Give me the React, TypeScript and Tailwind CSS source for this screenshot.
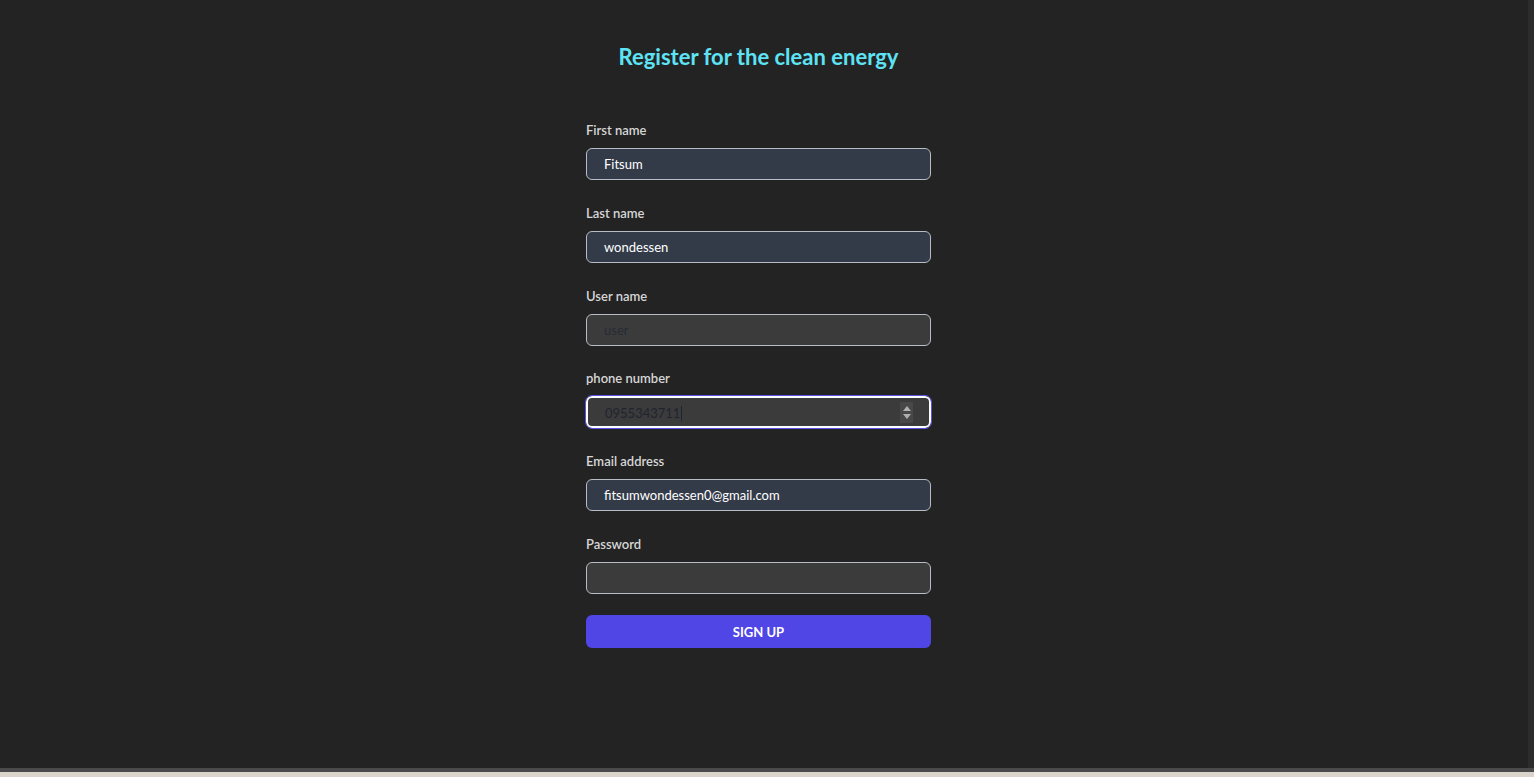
import React from "react";

const font = { fontFamily: 'Lato, "Noto Sans", sans-serif' };

function Field({
  label,
  value,
  placeholder,
  filled,
  focused,
  spinner,
  dark,
}: {
  label: string;
  value?: string;
  placeholder?: string;
  filled?: boolean;
  focused?: boolean;
  spinner?: boolean;
  dark?: boolean;
}) {
  return (
    <div>
      <label className="block text-[13px] leading-5 font-semibold text-[#d6d6d6]">{label}</label>
      <div className="mt-2">
        <div
          className={
            "relative flex h-[32px] items-center rounded-md pl-[17px] pr-3 pt-[2px] text-[13px] " +
            (focused
              ? "border-2 border-white bg-[#3b3b3b] outline outline-1 outline-[#5b52e8]"
              : filled
              ? "border border-[#b8bcc4] bg-[#333a48]"
              : "border border-[#b8bcc4] bg-[#3b3b3b]")
          }
        >
          {value ? (
            <span className={dark ? "text-[#1f2430]" : "text-white"}>
              {value}
              {focused && <span className="ml-[1px] inline-block h-[15px] w-px translate-y-[3px] bg-[#1f2430]" />}
            </span>
          ) : placeholder ? (
            <span className="text-[#262b36]">{placeholder}</span>
          ) : null}
          {spinner && (
            <div className="absolute right-[16px] top-[4px] flex h-[21px] w-[13px] flex-col items-center justify-center gap-[3px] bg-[#484848]">
              <svg width="8" height="5" viewBox="0 0 8 5"><path d="M4 0 L8 5 L0 5 Z" fill="#b0b0b0" /></svg>
              <svg width="8" height="5" viewBox="0 0 8 5"><path d="M0 0 L8 0 L4 5 Z" fill="#b0b0b0" /></svg>
            </div>
          )}
        </div>
      </div>
    </div>
  );
}

export default function App() {
  return (
    <div className="flex h-[777px] w-[1534px] flex-col overflow-hidden bg-[#232323]" style={font}>
      <div className="flex flex-1">
        <div className="flex flex-1 flex-col items-center pt-[41px] pr-[11px]">
          <h2 className="text-[22px] leading-8 font-bold text-[#5ee3f5]">
            Register for the clean energy
          </h2>
          <form className="mt-[47px] flex w-[345px] flex-col gap-[22.8px]">
            <Field label="First name" value="Fitsum" filled />
            <Field label="Last name" value="wondessen" filled />
            <Field label="User name" placeholder="user" />
            <Field label="phone number" value="0955343711" focused spinner dark />
            <Field label="Email address" value="fitsumwondessen0@gmail.com" filled />
            <Field label="Password" />
            <button
              type="button"
              className="-mt-[2px] flex h-[33px] w-full items-center justify-center rounded-md bg-[#4f46e5] pt-[2px] text-[13px] font-bold text-white"
            >
              SIGN UP
            </button>
          </form>
        </div>
        <div className="w-[6px] bg-[#2c2c2c]" />
      </div>
      <div className="h-[4px] bg-[#4a4a4a]" />
      <div className="h-[5px] bg-[#dad4ca]" />
    </div>
  );
}
